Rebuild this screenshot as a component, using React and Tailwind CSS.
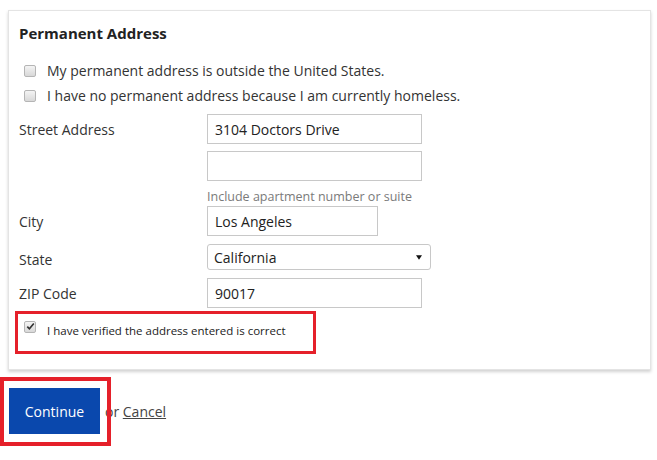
import React from "react";

function Box({ checked }) {
  return (
    <span className="relative inline-block w-[12px] h-[12px] rounded-[2px] border border-[#b5b5b5] bg-gradient-to-b from-[#f4f4f4] to-[#d8d8d8] shrink-0">
      {checked && (
        <svg viewBox="0 0 12 12" className="absolute left-[0px] top-[-1px] w-[11px] h-[11px]">
          <path d="M2.5 6.2 L4.8 8.6 L9.6 2.8" fill="none" stroke="#333" strokeWidth="1.8" />
        </svg>
      )}
    </span>
  );
}

function Field({ label, children, h = "h-[30px]" }) {
  return (
    <div className={`flex items-center ${h}`}>
      <div className="w-[188px] text-[14px] text-[#333]">{label}</div>
      {children}
    </div>
  );
}

export default function App() {
  return (
    <div
      className="relative w-[657px] h-[460px] bg-white text-[#333] pt-[10px]"
      style={{ fontFamily: '"Open Sans", "Noto Sans", sans-serif' }}
    >
      <div className="ml-[8px] w-[643px] h-[360px] border border-[#e4e4e4] shadow-[0_2px_3px_rgba(0,0,0,0.18)] pl-[10px] pt-[11px]">
        <div className="text-[15px] font-bold leading-[22px] text-[#222]">Permanent Address</div>
        <div className="mt-[14px]">
          <div className="flex items-center h-[25px] pl-[5px]">
            <Box />
            <span className="ml-[11px] text-[14px]">My permanent address is outside the United States.</span>
          </div>
          <div className="flex items-center h-[25px] pl-[5px]">
            <Box />
            <span className="ml-[11px] text-[14px]">I have no permanent address because I am currently homeless.</span>
          </div>
        </div>
        <div className="mt-[6px]">
          <Field label="Street Address">
            <div className="w-[215px] h-[30px] border border-[#c8c8c8] flex items-center px-[7px] text-[14px] text-[#222]">3104 Doctors Drive</div>
          </Field>
          <div className="mt-[7px] flex">
            <div className="w-[188px]" />
            <div className="w-[215px] h-[30px] border border-[#c8c8c8]" />
          </div>
          <div className="flex mt-[8px] h-[16px] items-center">
            <div className="w-[188px]" />
            <div className="text-[12.5px] text-[#7a7a7a]">Include apartment number or suite</div>
          </div>
          <div className="mt-[1px]">
            <Field label="City">
              <div className="w-[171px] h-[30px] border border-[#c8c8c8] flex items-center px-[7px] text-[14px] text-[#222]">Los Angeles</div>
            </Field>
          </div>
          <div className="mt-[8px] flex items-center h-[26px]">
            <div className="w-[188px] text-[14px] text-[#333] pt-[4px]">State</div>
            <div className="w-[224px] h-[26px] border border-[#c8c8c8] rounded-[3px] flex items-center justify-between pl-[6px] pr-[8px] text-[14px] text-[#222]">
              <span>California</span>
              <svg viewBox="0 0 8 6" className="w-[6px] h-[5px]"><path d="M0 0 H8 L4 6 Z" fill="#111" /></svg>
            </div>
          </div>
          <div className="mt-[8px]">
            <Field label="ZIP Code">
              <div className="w-[215px] h-[30px] border border-[#c8c8c8] flex items-center px-[7px] text-[14px] text-[#222]">90017</div>
            </Field>
          </div>
          <div className="mt-[3px] -ml-[4px] w-[301px] h-[43px] border-[3px] border-[#e5202a] flex items-start pt-[7px] pl-[6px]">
            <Box checked />
            <span className="ml-[11px] text-[11.5px] leading-[16px] mt-[2px] text-[#222]">I have verified the address entered is correct</span>
          </div>
        </div>
      </div>
      <div className="flex items-center mt-[18px] ml-[9px]">
        <button className="w-[91px] h-[46px] bg-[#0a48ad] text-white text-[14px]">Continue</button>
        <span className="ml-[5px] text-[14px] text-[#444]">or <span className="underline">Cancel</span></span>
      </div>
      <div className="absolute left-[0px] top-[377px] w-[111px] h-[69px] border-[4px] border-[#e5202a] pointer-events-none" />
    </div>
  );
}
